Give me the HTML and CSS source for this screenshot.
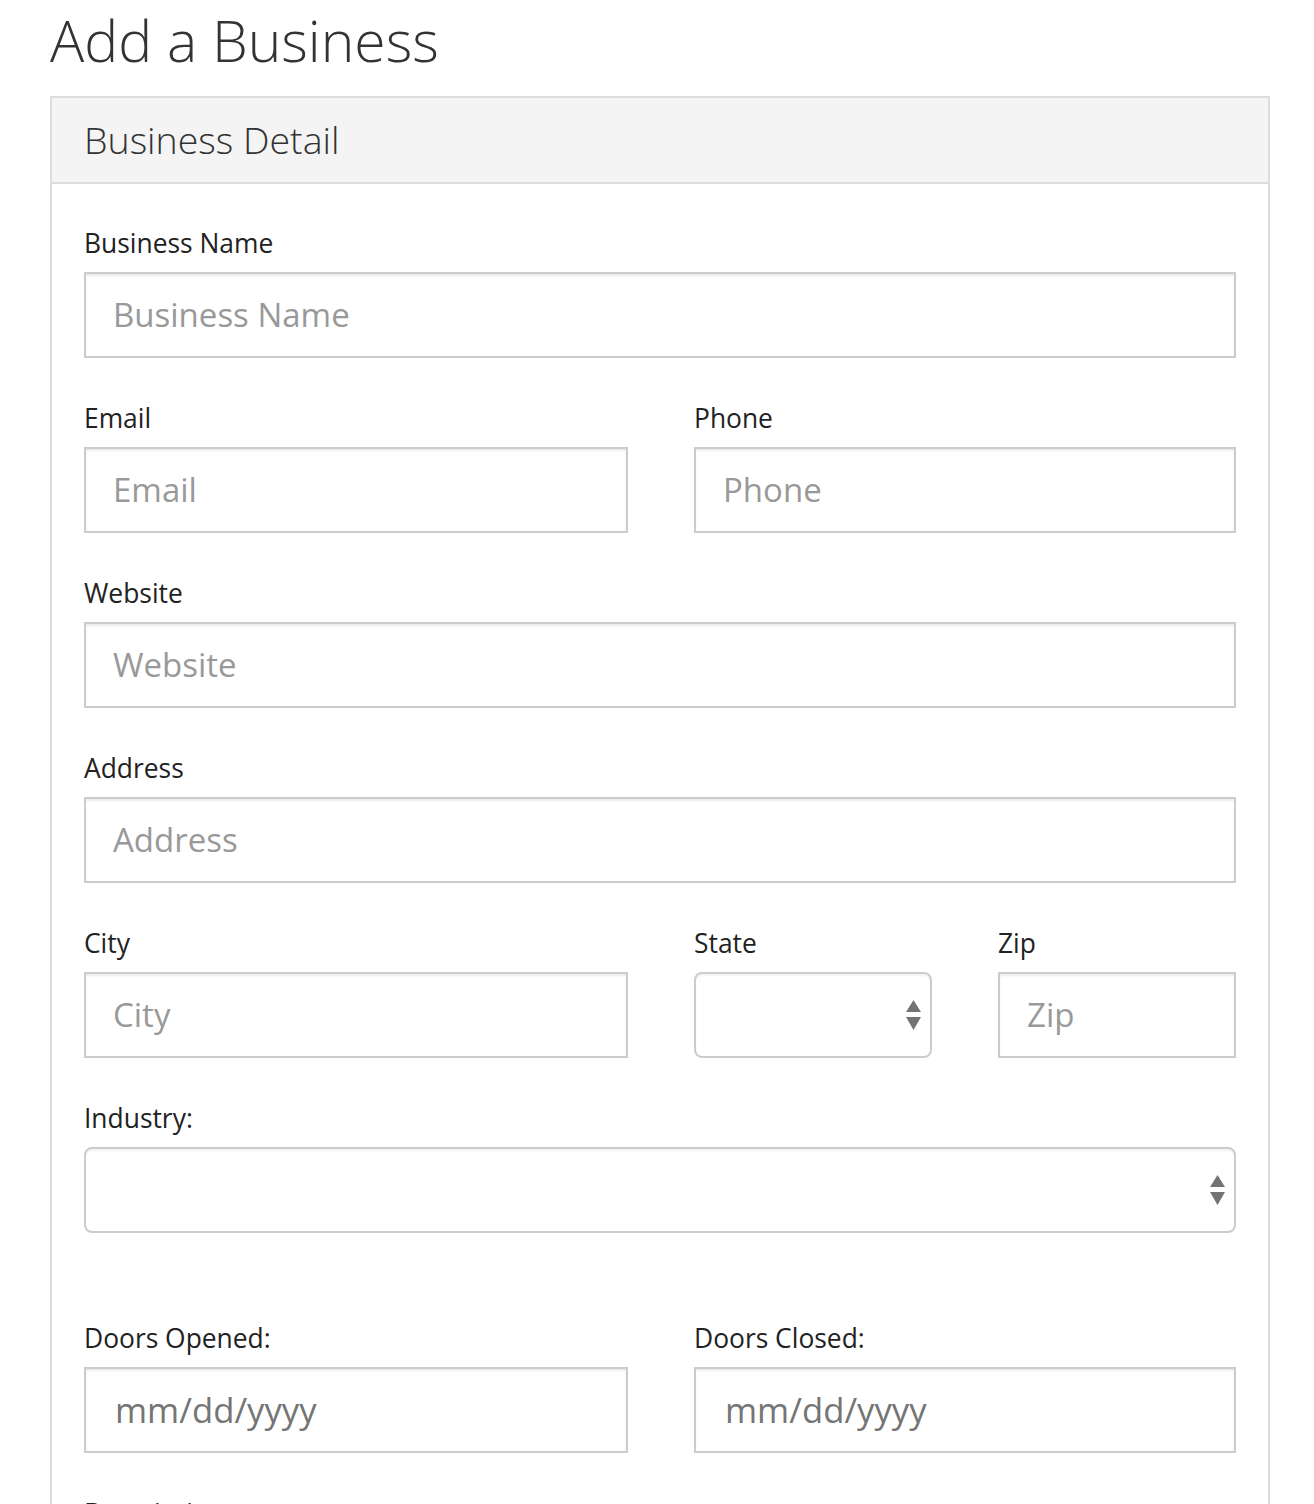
FILE: index.html
```html
<!DOCTYPE html>
<html lang="en">
<head>
<meta charset="utf-8">
<title>Add a Business</title>
<link rel="stylesheet" href="styles.css">
</head>
<body>
<div class="page">
  <h1 class="title">Add a Business</h1>
  <div class="panel">
    <div class="panel-heading">Business Detail</div>
    <div class="panel-body">
      <form class="form-grid">
        <div class="field span-4">
          <label class="label">Business Name</label>
          <input class="control" type="text" placeholder="Business Name">
        </div>
        <div class="field span-2">
          <label class="label">Email</label>
          <input class="control" type="text" placeholder="Email">
        </div>
        <div class="field span-2">
          <label class="label">Phone</label>
          <input class="control" type="text" placeholder="Phone">
        </div>
        <div class="field span-4">
          <label class="label">Website</label>
          <input class="control" type="text" placeholder="Website">
        </div>
        <div class="field span-4">
          <label class="label">Address</label>
          <input class="control" type="text" placeholder="Address">
        </div>
        <div class="field span-2">
          <label class="label">City</label>
          <input class="control" type="text" placeholder="City">
        </div>
        <div class="field span-1">
          <label class="label">State</label>
          <div class="select-wrap">
            <select class="control select"><option></option></select>
            <svg class="arrows" width="15" height="30" viewBox="0 0 15 30"><path d="M7.5 0 L15 12 L0 12 Z M0 17 L15 17 L7.5 30 Z" fill="#737373"/></svg>
          </div>
        </div>
        <div class="field span-1">
          <label class="label">Zip</label>
          <input class="control" type="text" placeholder="Zip">
        </div>
        <div class="field span-4 field-gap">
          <label class="label">Industry:</label>
          <div class="select-wrap">
            <select class="control select"><option></option></select>
            <svg class="arrows" width="15" height="30" viewBox="0 0 15 30"><path d="M7.5 0 L15 12 L0 12 Z M0 17 L15 17 L7.5 30 Z" fill="#737373"/></svg>
          </div>
        </div>
        <div class="field span-2">
          <label class="label">Doors Opened:</label>
          <input class="control date" type="text" placeholder="mm/dd/yyyy">
        </div>
        <div class="field span-2">
          <label class="label">Doors Closed:</label>
          <input class="control date" type="text" placeholder="mm/dd/yyyy">
        </div>
        <div class="field span-4">
          <label class="label">Description</label>
        </div>
      </form>
    </div>
  </div>
</div>
</body>
</html>
```
FILE: styles.css
```css
html, body {
  margin: 0;
  padding: 0;
  background: #fff;
}
body {
  font-family: "Open Sans", "Liberation Sans", sans-serif;
  color: #333;
}
.page {
  width: 1220px;
  padding-left: 50px;
}
.title {
  margin: 10px 0 24px;
  font-size: 57px;
  font-weight: 300;
  line-height: 61.6px;
  color: #333;
}
.panel {
  border: 2px solid #dddddd;
  background: #fff;
}
.panel-heading {
  background: #f4f4f4;
  border-bottom: 2px solid #dddddd;
  padding: 22px 32px;
  font-size: 37.5px;
  font-weight: 300;
  line-height: 40px;
  color: #333;
}
.panel-body {
  padding: 39px 32px 0;
}
.form-grid {
  display: grid;
  grid-template-columns: 239px 239px 238px 238px;
  column-gap: 66px;
}
.field {
  margin-bottom: 40px;
}
.field-gap {
  margin-bottom: 85px;
}
.span-4 { grid-column: span 4; }
.span-2 { grid-column: span 2; }
.span-1 { grid-column: span 1; }
.label {
  display: block;
  font-size: 26.4px;
  line-height: 37px;
  padding-top: 2px;
  margin-bottom: 10px;
  color: #222;
}
.control {
  display: block;
  box-sizing: border-box;
  width: 100%;
  height: 86px;
  margin: 0;
  padding: 0 27px;
  border: 2px solid #cccccc;
  border-radius: 0;
  background: #fff;
  box-shadow: inset 0 2px 2px rgba(0, 0, 0, 0.075);
  font-family: "Open Sans", "Liberation Sans", sans-serif;
  font-size: 33px;
  color: #555;
  outline: none;
}
.control::placeholder {
  color: #999;
}
.date {
  padding-left: 29px;
  font-size: 34.7px;
}
.date::placeholder {
  color: #757575;
}
.select-wrap {
  position: relative;
}
.select {
  appearance: none;
  -webkit-appearance: none;
  border-radius: 8px;
  box-shadow: inset 0 2px 2px rgba(0, 0, 0, 0.05);
}
.arrows {
  position: absolute;
  right: 11px;
  top: 28px;
  pointer-events: none;
}
```
